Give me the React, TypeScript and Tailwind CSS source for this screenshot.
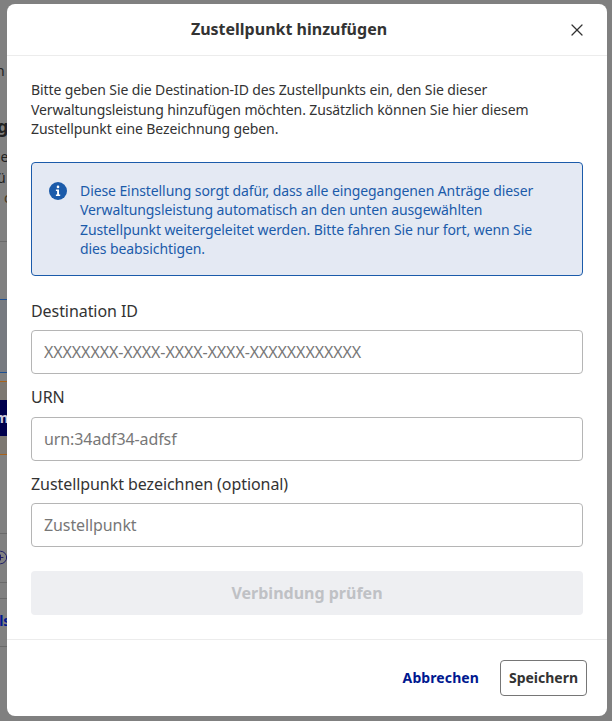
import React from 'react';
import { CirclePlus, X } from 'lucide-react';

const Field: React.FC<{ label: string; placeholder: string; className?: string; inputClassName?: string }> = ({
  label,
  placeholder,
  className,
  inputClassName,
}) => (
  <label className={`block ${className ?? ''}`}>
    <span className="block text-base leading-[24px] tracking-[-0.07px] text-[#333333]">{label}</span>
    <input
      placeholder={placeholder}
      className={`block h-[44px] w-full rounded border border-[#b5b5b5] bg-white px-3 text-base tracking-[-0.1px] text-[#333333] outline-none placeholder:text-[#777777] ${inputClassName ?? 'mt-[7px]'}`}
    />
  </label>
);

// the page behind the dialog, only a 7px strip of it is visible
const Backdrop: React.FC = () => (
  <div className="flex h-full w-[7px] flex-col overflow-hidden bg-[#808080] text-sm leading-5 text-[#222222]">
    <span className="ml-[-4px] mt-[61px] h-5 shrink-0">n</span>
    <span className="ml-[-3px] mt-[33px] h-6 shrink-0 text-lg font-bold leading-6">g</span>
    <span className="ml-[-3px] mt-[9px] h-5 shrink-0">ie</span>
    <span className="ml-[-3px] mt-px h-5 shrink-0">ü</span>
    <span className="ml-1 h-5 shrink-0 text-[#4a3a20]">c</span>
    <div className="mt-[33px] h-px shrink-0 bg-[#6a6a6a]" />
    <div className="mt-[57px] h-[74px] shrink-0 border-t border-[#1d4f91] border-b border-b-[#1d4f91] bg-[#777a80]" />
    <div className="mt-[8px] h-[74px] shrink-0 border-y border-[#a8621a] bg-[#7d7872]">
      <div className="mt-[18px] h-9 overflow-hidden bg-[#00004d] pl-0 text-sm font-bold leading-9 text-[#c8c8d8]">
        <span className="ml-[-5px]">m</span>
      </div>
    </div>
    <div className="mt-[78px] h-px shrink-0 bg-[#6a6a6a]" />
    <CirclePlus size={15} strokeWidth={1.5} className="ml-[-7px] mt-4 shrink-0 text-[#1a1a66]" />
    <div className="mt-[17px] h-px shrink-0 bg-[#6a6a6a]" />
    <div className="mt-[15px] h-px shrink-0 bg-[#6a6a6a]" />
    <span className="ml-[-5px] mt-3 h-5 shrink-0 font-bold text-[#00188f]">ils</span>
    <div className="mt-[15px] h-px shrink-0 bg-[#6a6a6a]" />
  </div>
);

const App: React.FC = () => {
  return (
    <div className="relative h-[721px] w-[612px] overflow-hidden bg-[#808080] font-['Noto_Sans',sans-serif]">
      <Backdrop />
      <div className="absolute left-[7px] top-1 flex h-[712px] w-[600px] flex-col rounded-lg bg-white">
        <header className="flex h-[52px] shrink-0 items-center border-b border-[#ececec] pb-px pr-5 pl-1">
          <h2 className="flex-1 text-center text-base font-bold text-[#333333]">Zustellpunkt hinzufügen</h2>
          <button className="text-[#333333]">
            <X size={20} strokeWidth={1.5} className="mt-[2px]" />
          </button>
        </header>

        <div className="flex-1 pl-6 pr-6 pt-6">
          <p className="w-[552px] text-sm leading-[19.6px] tracking-[-0.11px] text-[#333333]">
            Bitte geben Sie die Destination-ID des Zustellpunkts ein, den Sie dieser Verwaltungsleistung hinzufügen
            möchten. Zusätzlich können Sie hier diesem Zustellpunkt eine Bezeichnung geben.
          </p>

          <div className="mt-[23.2px] flex h-[114px] w-[552px] gap-[13px] rounded border border-[#1b5baa] bg-[#e4e9f3] pl-[17px] pr-6 pt-[17.6px]">
            <svg viewBox="0 0 18 18" className="mt-[1.4px] h-[18px] w-[18px] shrink-0">
              <circle cx="9" cy="9" r="9" fill="#1b5baa" />
              <circle cx="9" cy="4.9" r="1.3" fill="#ffffff" />
              <path d="M6.9 7.6h3.1v5h1.2v1.4H6.9v-1.4h1.2V9H6.9z" fill="#ffffff" />
            </svg>
            <p className="text-sm leading-[19.6px] tracking-[-0.09px] text-[#1b5baa]">
              Diese Einstellung sorgt dafür, dass alle eingegangenen Anträge dieser Verwaltungsleistung automatisch an
              den unten ausgewählten Zustellpunkt weitergeleitet werden. Bitte fahren Sie nur fort, wenn Sie dies
              beabsichtigen.
            </p>
          </div>

          <Field className="mt-[23px] w-[552px]" label="Destination ID" placeholder="XXXXXXXX-XXXX-XXXX-XXXX-XXXXXXXXXXXX" />
          <Field className="mt-[11px] w-[552px]" inputClassName="mt-2" label="URN" placeholder="urn:34adf34-adfsf" />
          <Field className="mt-[11px] w-[552px]" label="Zustellpunkt bezeichnen (optional)" placeholder="Zustellpunkt" />

          <button className="mt-6 h-[44px] w-[552px] rounded bg-[#eeeff2] text-base font-bold text-[#bfc1c5]">
            Verbindung prüfen
          </button>
        </div>

        <footer className="flex h-[77px] shrink-0 items-center justify-end gap-[21px] border-t border-[#ececec] pr-5">
          <button className="text-sm font-bold tracking-[0.1px] text-[#00188f]">Abbrechen</button>
          <button className="h-9 w-[87px] rounded border border-[#767676] text-sm font-bold text-[#333333]">
            Speichern
          </button>
        </footer>
      </div>
    </div>
  );
};

export default App;
